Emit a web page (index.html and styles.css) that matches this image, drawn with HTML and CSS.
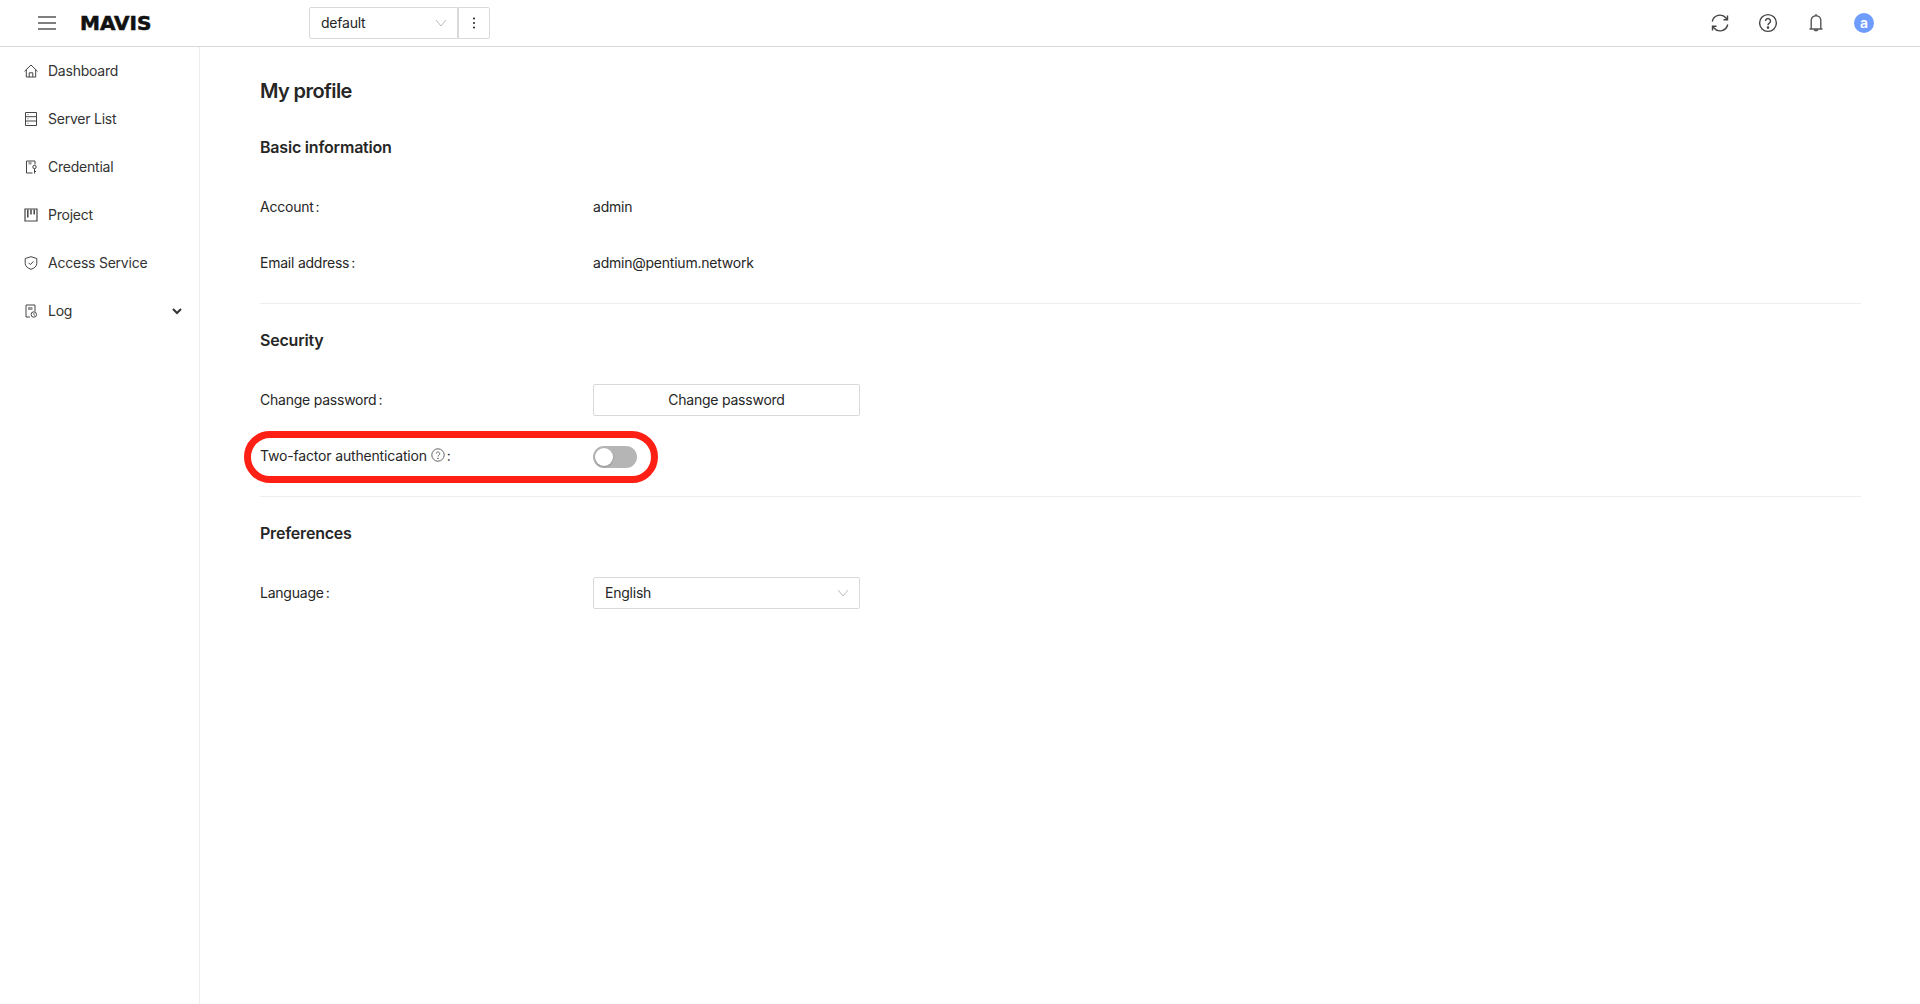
FILE: index.html
```html
<!DOCTYPE html>
<html lang="en">
<head>
<meta charset="utf-8">
<title>My profile</title>
<link rel="stylesheet" href="styles.css">
</head>
<body>
<header class="topbar">
  <button class="burger" aria-label="Menu">
    <svg width="18" height="14" viewBox="0 0 18 14"><path d="M0 1h18M0 7h18M0 13h18" stroke="#555" stroke-width="1.5" fill="none"/></svg>
  </button>
  <div class="logo">MAVIS</div>
  <div class="env">
    <div class="env-select"><span class="txt">default</span>
      <svg width="12" height="8" viewBox="0 0 12 8"><path d="M1 1l5 6 5-6" stroke="#bbb" fill="none"/></svg>
    </div>
    <button class="env-more" aria-label="More">
      <svg width="4" height="12" viewBox="0 0 4 12"><circle cx="2" cy="1.500" r="1.100" fill="#333"/><circle cx="2" cy="6" r="1.100" fill="#333"/><circle cx="2" cy="10.500" r="1.100" fill="#333"/></svg>
    </button>
  </div>
  <div class="top-icons">
    <svg width="20" height="20" viewBox="0 0 20 20" fill="none" stroke="#444" stroke-width="1.400"><path d="M2.300 8.500A7.800 7.800 0 0 1 16 5l1 1.300M17.700 11.500A7.800 7.800 0 0 1 4 15l-1-1.300"/><path d="M17.500 2.500v4.300h-4M2.500 17.500v-4.300h4"/></svg>
    <svg width="20" height="20" viewBox="0 0 20 20" fill="none" stroke="#444" stroke-width="1.400"><circle cx="10" cy="10" r="8.400"/><path d="M7.500 8a2.500 2.500 0 1 1 3.800 2.100c-.9.600-1.300 1-1.300 2.100"/><circle cx="10" cy="14.600" r=".6" fill="#444"/></svg>
    <svg width="20" height="20" viewBox="0 0 20 20" fill="none" stroke="#555" stroke-width="1.400"><path d="M5.200 16V7.500a4.800 4.800 0 0 1 9.600 0V16M3.500 16h13M10 1v1.700M8.200 16a1.800 1.800 0 0 0 3.600 0"/></svg>
    <div class="avatar"><span class="txt">a</span></div>
  </div>
</header>
<div class="shell">
  <nav class="side">
    <a class="nav-item"><svg width="14" height="14" viewBox="0 0 14 14" fill="none" stroke="#444"><path d="M.5 7.300L7 1l6.500 6.300M2.300 5.800V13h9.400V5.800M5.200 13V8.800h3.600V13"/></svg><span class="txt">Dashboard</span></a>
    <a class="nav-item"><svg width="14" height="14" viewBox="0 0 14 14" fill="none" stroke="#444"><path d="M1.500.5h11v13h-11zM1.500 4.700h11M1.500 9h11"/><path d="M3.500 2.600h1M3.500 6.800h1M3.500 11.200h1" stroke="#777"/></svg><span class="txt">Server List</span></a>
    <a class="nav-item"><svg width="14" height="14" viewBox="0 0 14 14" fill="none" stroke="#444"><path d="M8.500 13H2.500V1H11v3.500"/><path d="M4.500 1.500h3v3h-3z" fill="#999" stroke="none"/><circle cx="10.500" cy="7" r="1.700"/><path d="M10.500 8.700V13.500M10.500 11.500h1.500"/></svg><span class="txt">Credential</span></a>
    <a class="nav-item"><svg width="14" height="14" viewBox="0 0 14 14" fill="none" stroke="#444" stroke-width="1.200"><path d="M1 1h12v12H1z"/><path d="M3.800 1.500v8M7 1.500v5M10.200 1.500v5" stroke-width="1.500"/></svg><span class="txt">Project</span></a>
    <a class="nav-item"><svg width="14" height="14" viewBox="0 0 14 14" fill="none" stroke="#444"><path d="M7 .7l5.800 1.800v5c0 2.800-2.600 4.800-5.800 5.800-3.200-1-5.800-3-5.800-5.800v-5z"/><path d="M4.600 6.800l1.800 1.800 3-3.200"/></svg><span class="txt">Access Service</span></a>
    <a class="nav-item"><svg width="14" height="14" viewBox="0 0 14 14" fill="none" stroke="#444"><path d="M6 13H2V1h9v6.500"/><path d="M4 3h4.500v3H4z" fill="#999" stroke="none"/><circle cx="9.800" cy="10.500" r="2.700"/><path d="M9.800 9.200v1.300l1 .8"/></svg><span class="txt">Log</span>
      <svg class="nav-caret" width="10" height="7" viewBox="0 0 10 7"><path d="M1 1l4 4 4-4" stroke="#333" stroke-width="2" fill="none"/></svg>
    </a>
  </nav>
  <main class="main">
    <h1 class="page-title">My profile</h1>
    <section class="section">
      <h2 class="section-title">Basic information</h2>
      <div class="row"><div class="label txt">Account<i>:</i></div><div class="txt">admin</div></div>
      <div class="row"><div class="label txt">Email address<i>:</i></div><div class="txt">admin@pentium.network</div></div>
    </section>
    <section class="section">
      <h2 class="section-title">Security</h2>
      <div class="row"><div class="label txt">Change password<i>:</i></div><button class="btn"><span class="btn-text">Change password</span></button></div>
      <div class="row"><div class="label txt"><span class="wide">Two-factor authentication</span><svg class="help" width="14" height="14" viewBox="0 0 14 14" fill="none" stroke="#666"><circle cx="7" cy="7" r="6.200"/><path d="M5.300 5.600a1.700 1.700 0 1 1 2.600 1.500c-.6.400-.9.700-.9 1.400"/><circle cx="7" cy="10.300" r=".4" fill="#666"/></svg><i>:</i></div>
        <div class="switch"><span class="knob"></span></div></div>
    </section>
    <section class="section last">
      <h2 class="section-title">Preferences</h2>
      <div class="row"><div class="label txt">Language<i>:</i></div>
        <div class="select"><span class="txt">English</span><svg width="12" height="8" viewBox="0 0 12 8"><path d="M1 1l5 6 5-6" stroke="#bbb" fill="none"/></svg></div></div>
    </section>
    <div class="callout"></div>
  </main>
</div>
</body>
</html>
```
FILE: styles.css
```css
* { box-sizing: border-box; }
html, body { margin: 0; height: 100%; }
body { font-family: Inter, "Liberation Sans", sans-serif; font-size: 14px; letter-spacing: -0.23px; color: #262626; background: #fff; overflow: hidden; }
.txt { margin-bottom: 2px; }
.topbar { height: 47px; border-bottom: 1px solid #d9d9d9; display: flex; align-items: center; padding-left: 38px; }
.burger { border: 0; background: none; padding: 0; width: 18px; height: 14px; display: flex; margin-right: 24px; }
.logo { width: 229px; font-family: "DejaVu Sans", sans-serif; font-weight: 700; font-size: 20px; letter-spacing: 0; color: #111; -webkit-text-stroke: 0.6px #111; }
.env { display: flex; height: 32px; }
.env-select { width: 149px; border: 1px solid #d9d9d9; border-radius: 2px 0 0 2px; display: flex; align-items: center; justify-content: space-between; padding: 0 10px 0 11px; }
.env-more { width: 32px; border: 1px solid #d9d9d9; border-radius: 0 2px 2px 0; background: #fff; padding: 0; display: flex; align-items: center; justify-content: center; }
.top-icons { margin-left: auto; display: flex; align-items: center; gap: 28px; padding-right: 46px; }
.avatar { width: 20px; height: 20px; border-radius: 50%; background: #6f9cff; color: #fff; font-size: 14px; font-weight: 600; display: flex; align-items: center; justify-content: center; }
.shell { display: flex; height: 957px; }
.side { width: 200px; border-right: 1px solid #eee; flex: none; }
.nav-item { height: 48px; display: flex; align-items: center; gap: 10px; padding-left: 24px; padding-right: 17px; color: #333; }
.nav-caret { margin-left: auto; }
.main { flex: 1; padding: 30px 59px 0 60px; position: relative; }
.page-title { margin: 0 0 30px; font-size: 20px; line-height: 28px; font-weight: 600; letter-spacing: -0.6px; color: #262626; }
.section { border-bottom: 1px solid #eee; padding-bottom: 24px; margin-bottom: 24px; }
.section.last { border: 0; }
.section-title { margin: 0 0 32px; font-size: 16px; line-height: 24px; font-weight: 600; letter-spacing: -0.2px; }
.row { display: flex; align-items: center; min-height: 32px; margin-bottom: 24px; }
.row:last-child { margin-bottom: 0; }
.label { width: 333px; display: flex; align-items: center; flex: none; }
.label i { font-style: normal; margin-left: 2px; }
.wide { letter-spacing: -0.17px; }
.help { margin-left: 4px; }
.btn { width: 267px; height: 32px; border: 1px solid #d9d9d9; border-radius: 2px; background: #fff; font: inherit; letter-spacing: inherit; color: #262626; padding: 0 0 2px; }
.switch { width: 44px; height: 22px; border-radius: 11px; background: #b5b5b5; padding: 2px; margin-top: 2px; }
.knob { display: block; width: 18px; height: 18px; border-radius: 50%; background: #fff; box-shadow: 0 1px 2px rgba(0,0,0,0.2); }
.select { width: 267px; height: 32px; border: 1px solid #d9d9d9; border-radius: 2px; display: flex; align-items: center; justify-content: space-between; padding: 0 10px 0 11px; }
.callout { position: absolute; left: 44px; top: 384px; width: 414px; height: 52px; border: 7px solid #ff2015; border-radius: 26px; }
```
